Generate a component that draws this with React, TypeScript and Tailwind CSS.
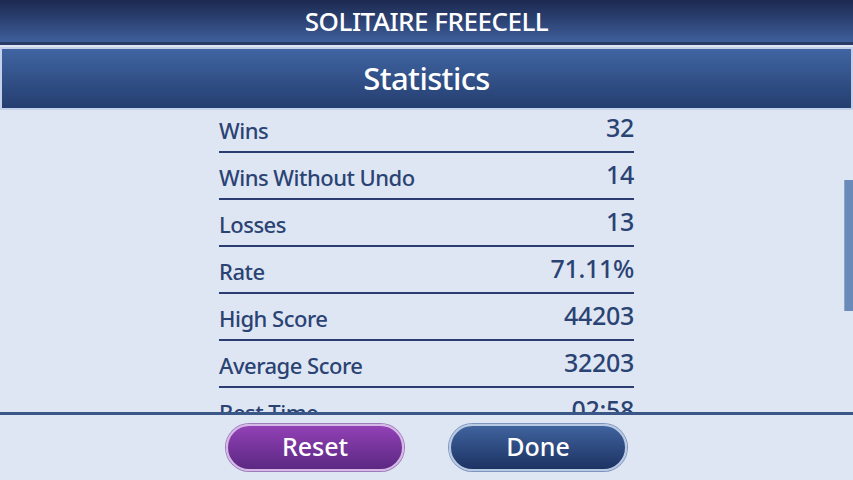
import React from "react";

const rows: [string, string][] = [
  ["Wins", "32"],
  ["Wins Without Undo", "14"],
  ["Losses", "13"],
  ["Rate", "71.11%"],
  ["High Score", "44203"],
  ["Average Score", "32203"],
  ["Best Time", "02:58"],
];

export default function App() {
  return (
    <div
      className="w-[853px] h-[480px] overflow-hidden flex flex-col bg-[#dfe6f3] text-[#2a4373]"
      style={{ fontFamily: '"Noto Sans", "Open Sans", sans-serif' }}
    >
      <div className="h-[45px] shrink-0 bg-gradient-to-b from-[#1c2950] to-[#3f5f9c] flex items-center justify-center text-white text-[26px] font-medium tracking-[-0.5px] border-b-[3px] border-[#2a3b66]">
        SOLITAIRE FREECELL
      </div>
      <div className="h-[2px] shrink-0 bg-[#dfe6f3]" />
      <div className="h-[63px] shrink-0 border-[2px] border-[#c3d2ea] bg-gradient-to-b from-[#4065a2] to-[#253e70] flex items-center justify-center text-white text-[31px] font-medium tracking-[-0.6px]">
        Statistics
      </div>
      <div className="flex-1 relative overflow-hidden">
        <div className="w-[415px] ml-[219px] -mt-[4px]">
          {rows.map(([k, v]) => (
            <div key={k} className="h-[47px] flex flex-col">
              <div className="flex-1 flex justify-between items-center pt-[3px] font-medium">
                <span className="text-[22px] tracking-[-0.5px]">{k}</span>
                <span className="text-[25px] tracking-[-0.3px] -mt-[4px]">{v}</span>
              </div>
              <div className="h-[2px] bg-[#2b3c70]" />
            </div>
          ))}
        </div>
        <div className="absolute right-0 top-[70px] w-[9px] h-[131px] bg-[#6a8bb9] border-l border-[#8aa5cc]" />
      </div>
      <div className="h-[3px] shrink-0 bg-[#3a5788]" />
      <div className="h-[65px] shrink-0 flex items-center justify-center gap-[45px] pb-[1px]">
        <button className="w-[178px] h-[47px] rounded-full border-[2px] border-[#d6b8e6] bg-gradient-to-b from-[#9241b6] to-[#5c2883] text-white text-[25px] font-medium shadow-[0_0_0_1px_#a07abd]">
          Reset
        </button>
        <button className="w-[178px] h-[47px] rounded-full border-[2px] border-[#b8c9e4] bg-gradient-to-b from-[#40639e] to-[#1d3363] text-white text-[25px] font-medium shadow-[0_0_0_1px_#7d95be]">
          Done
        </button>
      </div>
    </div>
  );
}
